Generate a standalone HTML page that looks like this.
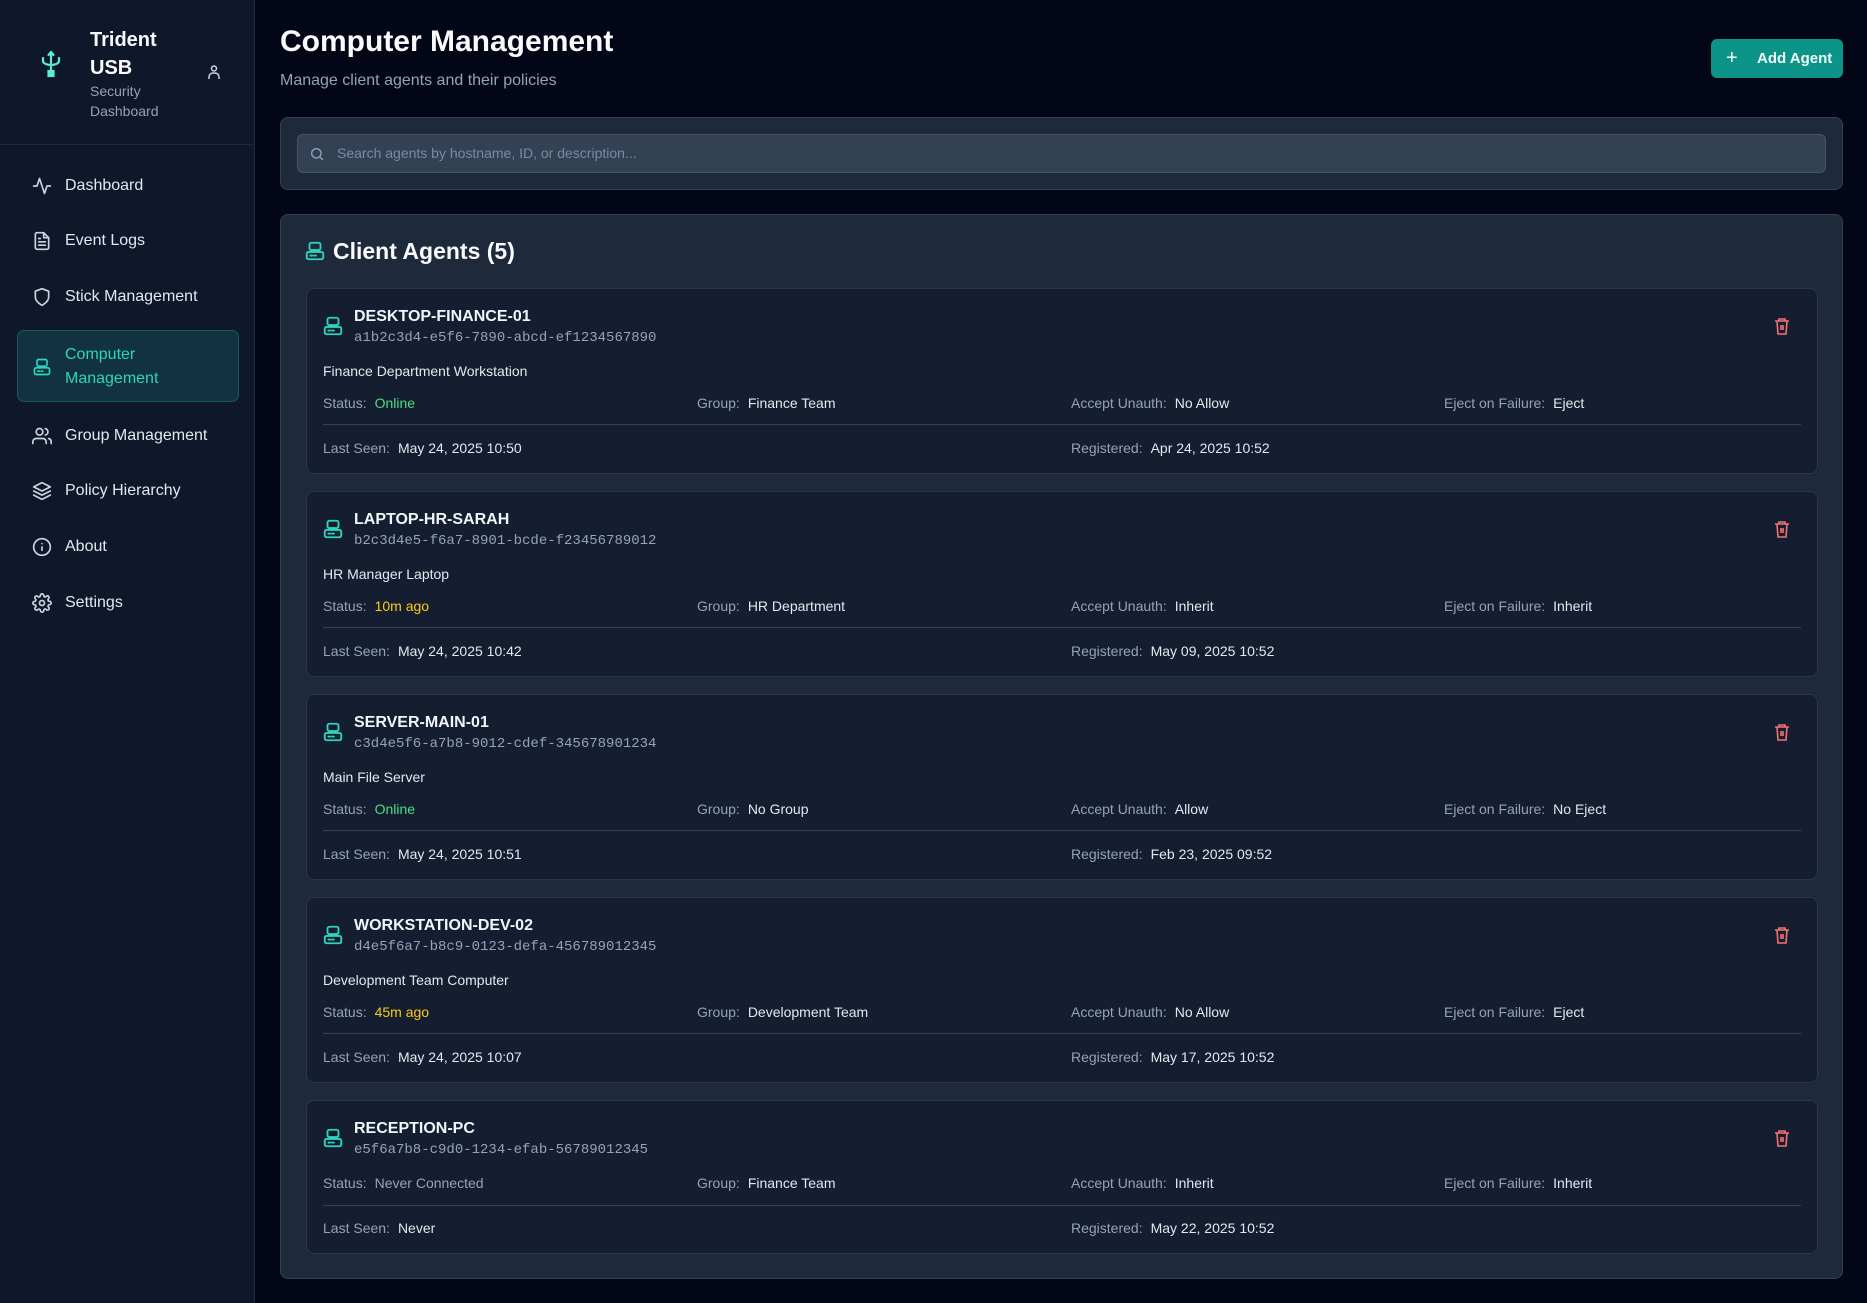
<!DOCTYPE html>
<html><head><meta charset="utf-8"><style>
*{box-sizing:border-box;margin:0;padding:0}
body{width:1867px;height:1303px;background:#020617;font-family:"Liberation Sans",sans-serif;color:#e2e8f0;position:relative;overflow:hidden}
.abs{position:absolute}
.side{left:0;top:0;width:255px;height:1303px;background:#0f172a;border-right:1px solid #1e293b}
.hdrline{left:0;top:144px;width:255px;height:1px;background:#1e293b}
.nav{left:32px;font-size:16px;color:#e2e8f0;display:flex;align-items:center;height:24px}
.nav svg{margin-right:13px}
.active{left:17px;top:330px;width:222px;height:72px;background:#133241;border:1px solid #115e59;border-radius:7px}
.card{left:306px;width:1512px;background:#151e30;border:1px solid #2a3649;border-radius:8px}
.name{left:47px;font-size:16px;font-weight:bold;color:#f1f5f9}
.id{left:47px;font-family:"Liberation Mono",monospace;font-size:14px;color:#94a3b8}
.t{font-size:14px;color:#e2e8f0;white-space:nowrap}
.l{color:#94a3b8;margin-right:8px}
.div{left:16px;right:16px;height:1px;background:#334155}
</style></head><body>
<div class="abs side"></div>
<div class="abs hdrline"></div>
<svg class="abs" style="left:40px;top:50px" width="22" height="28" viewBox="0 0 22 28" fill="none" stroke="#5eead4" stroke-width="2.2" stroke-linecap="round"><path d="M11 2v20M3 8v3a8 4 0 0 0 16 0V8M11 2l-2.5 3M11 2l2.5 3"/><rect x="8.5" y="21" width="5" height="5" fill="#5eead4"/></svg>
<div class="abs" style="left:90px;top:26px;font-size:20px;font-weight:bold;line-height:28px;color:#f8fafc">Trident<br>USB</div>
<div class="abs" style="left:90px;top:81px;font-size:14px;line-height:20px;color:#94a3b8">Security<br>Dashboard</div>
<svg class="abs" style="left:207px;top:64px" width="14" height="16" viewBox="0 0 14 16" fill="none" stroke="#cbd5e1" stroke-width="1.5"><circle cx="7" cy="4.5" r="2.5"/><path d="M2 15v-2a4 4 0 0 1 4-4h2a4 4 0 0 1 4 4v2"/></svg>

<div class="abs active"></div>
<div class="abs nav" style="top:174px"><svg width="20" height="20" viewBox="0 0 24 24" fill="none" stroke="#cbd5e1" stroke-width="2" stroke-linecap="round" stroke-linejoin="round"><path d="M22 12h-4l-3 9L9 3l-3 9H2"/></svg>Dashboard</div>
<div class="abs nav" style="top:229px"><svg width="20" height="20" viewBox="0 0 24 24" fill="none" stroke="#cbd5e1" stroke-width="2" stroke-linecap="round" stroke-linejoin="round"><path d="M14 2H6a2 2 0 0 0-2 2v16a2 2 0 0 0 2 2h12a2 2 0 0 0 2-2V8z"/><path d="M14 2v6h6M16 13H8M16 17H8M10 9H8"/></svg>Event Logs</div>
<div class="abs nav" style="top:285px"><svg width="20" height="20" viewBox="0 0 24 24" fill="none" stroke="#cbd5e1" stroke-width="2" stroke-linecap="round" stroke-linejoin="round"><path d="M12 22s8-4 8-10V5l-8-3-8 3v7c0 6 8 10 8 10z"/></svg>Stick Management</div>
<div class="abs nav" style="top:343px;height:48px;color:#2dd4bf;line-height:24px"><svg width="20" height="20" viewBox="0 0 24 24" fill="none" stroke="#2dd4bf" stroke-width="2" stroke-linecap="round"><rect x="6" y="3" width="12" height="8" rx="2"/><rect x="3" y="13" width="18" height="8" rx="2"/><path d="M7 17h2M11 17h2"/></svg><span>Computer<br>Management</span></div>
<div class="abs nav" style="top:424px"><svg width="20" height="20" viewBox="0 0 24 24" fill="none" stroke="#cbd5e1" stroke-width="2" stroke-linecap="round" stroke-linejoin="round"><path d="M17 21v-2a4 4 0 0 0-4-4H5a4 4 0 0 0-4 4v2"/><circle cx="9" cy="7" r="4"/><path d="M23 21v-2a4 4 0 0 0-3-3.9M16 3.1a4 4 0 0 1 0 7.8"/></svg>Group Management</div>
<div class="abs nav" style="top:479px"><svg width="20" height="20" viewBox="0 0 24 24" fill="none" stroke="#cbd5e1" stroke-width="2" stroke-linecap="round" stroke-linejoin="round"><path d="M12 2 2 7l10 5 10-5-10-5zM2 17l10 5 10-5M2 12l10 5 10-5"/></svg>Policy Hierarchy</div>
<div class="abs nav" style="top:535px"><svg width="20" height="20" viewBox="0 0 24 24" fill="none" stroke="#cbd5e1" stroke-width="2" stroke-linecap="round"><circle cx="12" cy="12" r="10"/><path d="M12 16v-4M12 8h.01"/></svg>About</div>
<div class="abs nav" style="top:591px"><svg width="20" height="20" viewBox="0 0 24 24" fill="none" stroke="#cbd5e1" stroke-width="2" stroke-linecap="round" stroke-linejoin="round"><circle cx="12" cy="12" r="3"/><path d="M19.4 15a1.7 1.7 0 0 0 .3 1.8l.1.1a2 2 0 1 1-2.8 2.8l-.1-.1a1.7 1.7 0 0 0-1.8-.3 1.7 1.7 0 0 0-1 1.5V21a2 2 0 1 1-4 0v-.1a1.7 1.7 0 0 0-1.1-1.5 1.7 1.7 0 0 0-1.8.3l-.1.1a2 2 0 1 1-2.8-2.8l.1-.1a1.7 1.7 0 0 0 .3-1.8 1.7 1.7 0 0 0-1.5-1H3a2 2 0 1 1 0-4h.1a1.7 1.7 0 0 0 1.5-1.1 1.7 1.7 0 0 0-.3-1.8l-.1-.1a2 2 0 1 1 2.8-2.8l.1.1a1.7 1.7 0 0 0 1.8.3H9a1.7 1.7 0 0 0 1-1.5V3a2 2 0 1 1 4 0v.1a1.7 1.7 0 0 0 1 1.5 1.7 1.7 0 0 0 1.8-.3l.1-.1a2 2 0 1 1 2.8 2.8l-.1.1a1.7 1.7 0 0 0-.3 1.8V9a1.7 1.7 0 0 0 1.5 1H21a2 2 0 1 1 0 4h-.1a1.7 1.7 0 0 0-1.5 1z"/></svg>Settings</div>

<div class="abs" style="left:280px;top:25px;font-size:30px;font-weight:bold;color:#f8fafc">Computer Management</div>
<div class="abs" style="left:280px;top:72px;font-size:16px;color:#94a3b8">Manage client agents and their policies</div>
<div class="abs" style="left:1711px;top:39px;width:132px;height:39px;background:#0d9488;border-radius:6px;font-size:15px;font-weight:bold;color:#f0fdfa;line-height:39px"><span style="position:absolute;left:15px;font-size:20px;font-weight:normal">+</span><span style="position:absolute;left:46px">Add Agent</span></div>

<div class="abs" style="left:280px;top:117px;width:1563px;height:73px;background:#1e293b;border:1px solid #334155;border-radius:8px"></div>
<div class="abs" style="left:297px;top:134px;width:1529px;height:39px;background:#334155;border:1px solid #475569;border-radius:6px"></div>
<svg class="abs" style="left:309px;top:146px" width="16" height="16" viewBox="0 0 24 24" fill="none" stroke="#94a3b8" stroke-width="2"><circle cx="11" cy="11" r="7"/><path d="m21 21-4.3-4.3"/></svg>
<div class="abs" style="left:337px;top:145px;font-size:14px;color:#7c8aa0">Search agents by hostname, ID, or description...</div>

<div class="abs" style="left:280px;top:214px;width:1563px;height:1065px;background:#1e293b;border:1px solid #334155;border-radius:8px"></div>
<svg class="abs" style="left:304px;top:239px" width="22" height="24" viewBox="0 0 24 24" fill="none" stroke="#2dd4bf" stroke-width="2" stroke-linecap="round"><rect x="6" y="3" width="12" height="8" rx="2"/><rect x="3" y="13" width="18" height="8" rx="2"/><path d="M7 17h2M11 17h2"/></svg>
<div class="abs" style="left:333px;top:238px;font-size:23px;font-weight:bold;color:#f8fafc">Client Agents (5)</div>

<div class="abs card" style="top:288px;height:186px">
<svg class="abs" style="left:15px;top:25px" width="22" height="24" viewBox="0 0 24 24" fill="none" stroke="#2dd4bf" stroke-width="2" stroke-linecap="round"><rect x="6" y="3" width="12" height="8" rx="2"/><rect x="3" y="13" width="18" height="8" rx="2"/><path d="M7 17h2M11 17h2"/></svg>
<div class="abs name" style="top:19px">DESKTOP-FINANCE-01</div>
<div class="abs id" style="top:41px">a1b2c3d4-e5f6-7890-abcd-ef1234567890</div>
<svg class="abs" style="left:1467px;top:28px" width="16" height="18" viewBox="0 0 16 18" fill="none" stroke="#f87171" stroke-width="1.6"><path d="M1 4h14M5 4V2h6v2M3 4l1 13h8l1-13M7 8v5M9 8v5"/></svg>
<div class="abs t" style="left:16px;top:74px">Finance Department Workstation</div>
<div class="abs t" style="left:16px;top:106px"><span class="l">Status:</span><span style="color:#4ade80">Online</span></div>
<div class="abs t" style="left:390px;top:106px"><span class="l">Group:</span>Finance Team</div>
<div class="abs t" style="left:764px;top:106px"><span class="l">Accept Unauth:</span>No Allow</div>
<div class="abs t" style="left:1137px;top:106px"><span class="l">Eject on Failure:</span>Eject</div>
<div class="abs div" style="top:135px"></div>
<div class="abs t" style="left:16px;top:151px"><span class="l">Last Seen:</span>May 24, 2025 10:50</div>
<div class="abs t" style="left:764px;top:151px"><span class="l">Registered:</span>Apr 24, 2025 10:52</div>
</div>

<div class="abs card" style="top:491px;height:186px">
<svg class="abs" style="left:15px;top:25px" width="22" height="24" viewBox="0 0 24 24" fill="none" stroke="#2dd4bf" stroke-width="2" stroke-linecap="round"><rect x="6" y="3" width="12" height="8" rx="2"/><rect x="3" y="13" width="18" height="8" rx="2"/><path d="M7 17h2M11 17h2"/></svg>
<div class="abs name" style="top:19px">LAPTOP-HR-SARAH</div>
<div class="abs id" style="top:41px">b2c3d4e5-f6a7-8901-bcde-f23456789012</div>
<svg class="abs" style="left:1467px;top:28px" width="16" height="18" viewBox="0 0 16 18" fill="none" stroke="#f87171" stroke-width="1.6"><path d="M1 4h14M5 4V2h6v2M3 4l1 13h8l1-13M7 8v5M9 8v5"/></svg>
<div class="abs t" style="left:16px;top:74px">HR Manager Laptop</div>
<div class="abs t" style="left:16px;top:106px"><span class="l">Status:</span><span style="color:#facc15">10m ago</span></div>
<div class="abs t" style="left:390px;top:106px"><span class="l">Group:</span>HR Department</div>
<div class="abs t" style="left:764px;top:106px"><span class="l">Accept Unauth:</span>Inherit</div>
<div class="abs t" style="left:1137px;top:106px"><span class="l">Eject on Failure:</span>Inherit</div>
<div class="abs div" style="top:135px"></div>
<div class="abs t" style="left:16px;top:151px"><span class="l">Last Seen:</span>May 24, 2025 10:42</div>
<div class="abs t" style="left:764px;top:151px"><span class="l">Registered:</span>May 09, 2025 10:52</div>
</div>

<div class="abs card" style="top:694px;height:186px">
<svg class="abs" style="left:15px;top:25px" width="22" height="24" viewBox="0 0 24 24" fill="none" stroke="#2dd4bf" stroke-width="2" stroke-linecap="round"><rect x="6" y="3" width="12" height="8" rx="2"/><rect x="3" y="13" width="18" height="8" rx="2"/><path d="M7 17h2M11 17h2"/></svg>
<div class="abs name" style="top:19px">SERVER-MAIN-01</div>
<div class="abs id" style="top:41px">c3d4e5f6-a7b8-9012-cdef-345678901234</div>
<svg class="abs" style="left:1467px;top:28px" width="16" height="18" viewBox="0 0 16 18" fill="none" stroke="#f87171" stroke-width="1.6"><path d="M1 4h14M5 4V2h6v2M3 4l1 13h8l1-13M7 8v5M9 8v5"/></svg>
<div class="abs t" style="left:16px;top:74px">Main File Server</div>
<div class="abs t" style="left:16px;top:106px"><span class="l">Status:</span><span style="color:#4ade80">Online</span></div>
<div class="abs t" style="left:390px;top:106px"><span class="l">Group:</span>No Group</div>
<div class="abs t" style="left:764px;top:106px"><span class="l">Accept Unauth:</span>Allow</div>
<div class="abs t" style="left:1137px;top:106px"><span class="l">Eject on Failure:</span>No Eject</div>
<div class="abs div" style="top:135px"></div>
<div class="abs t" style="left:16px;top:151px"><span class="l">Last Seen:</span>May 24, 2025 10:51</div>
<div class="abs t" style="left:764px;top:151px"><span class="l">Registered:</span>Feb 23, 2025 09:52</div>
</div>

<div class="abs card" style="top:897px;height:186px">
<svg class="abs" style="left:15px;top:25px" width="22" height="24" viewBox="0 0 24 24" fill="none" stroke="#2dd4bf" stroke-width="2" stroke-linecap="round"><rect x="6" y="3" width="12" height="8" rx="2"/><rect x="3" y="13" width="18" height="8" rx="2"/><path d="M7 17h2M11 17h2"/></svg>
<div class="abs name" style="top:19px">WORKSTATION-DEV-02</div>
<div class="abs id" style="top:41px">d4e5f6a7-b8c9-0123-defa-456789012345</div>
<svg class="abs" style="left:1467px;top:28px" width="16" height="18" viewBox="0 0 16 18" fill="none" stroke="#f87171" stroke-width="1.6"><path d="M1 4h14M5 4V2h6v2M3 4l1 13h8l1-13M7 8v5M9 8v5"/></svg>
<div class="abs t" style="left:16px;top:74px">Development Team Computer</div>
<div class="abs t" style="left:16px;top:106px"><span class="l">Status:</span><span style="color:#facc15">45m ago</span></div>
<div class="abs t" style="left:390px;top:106px"><span class="l">Group:</span>Development Team</div>
<div class="abs t" style="left:764px;top:106px"><span class="l">Accept Unauth:</span>No Allow</div>
<div class="abs t" style="left:1137px;top:106px"><span class="l">Eject on Failure:</span>Eject</div>
<div class="abs div" style="top:135px"></div>
<div class="abs t" style="left:16px;top:151px"><span class="l">Last Seen:</span>May 24, 2025 10:07</div>
<div class="abs t" style="left:764px;top:151px"><span class="l">Registered:</span>May 17, 2025 10:52</div>
</div>

<div class="abs card" style="top:1100px;height:154px">
<svg class="abs" style="left:15px;top:25px" width="22" height="24" viewBox="0 0 24 24" fill="none" stroke="#2dd4bf" stroke-width="2" stroke-linecap="round"><rect x="6" y="3" width="12" height="8" rx="2"/><rect x="3" y="13" width="18" height="8" rx="2"/><path d="M7 17h2M11 17h2"/></svg>
<div class="abs name" style="top:19px">RECEPTION-PC</div>
<div class="abs id" style="top:41px">e5f6a7b8-c9d0-1234-efab-56789012345</div>
<svg class="abs" style="left:1467px;top:28px" width="16" height="18" viewBox="0 0 16 18" fill="none" stroke="#f87171" stroke-width="1.6"><path d="M1 4h14M5 4V2h6v2M3 4l1 13h8l1-13M7 8v5M9 8v5"/></svg>
<div class="abs t" style="left:16px;top:74px"><span class="l">Status:</span><span style="color:#94a3b8">Never Connected</span></div>
<div class="abs t" style="left:390px;top:74px"><span class="l">Group:</span>Finance Team</div>
<div class="abs t" style="left:764px;top:74px"><span class="l">Accept Unauth:</span>Inherit</div>
<div class="abs t" style="left:1137px;top:74px"><span class="l">Eject on Failure:</span>Inherit</div>
<div class="abs div" style="top:104px"></div>
<div class="abs t" style="left:16px;top:119px"><span class="l">Last Seen:</span>Never</div>
<div class="abs t" style="left:764px;top:119px"><span class="l">Registered:</span>May 22, 2025 10:52</div>
</div>
</body></html>
